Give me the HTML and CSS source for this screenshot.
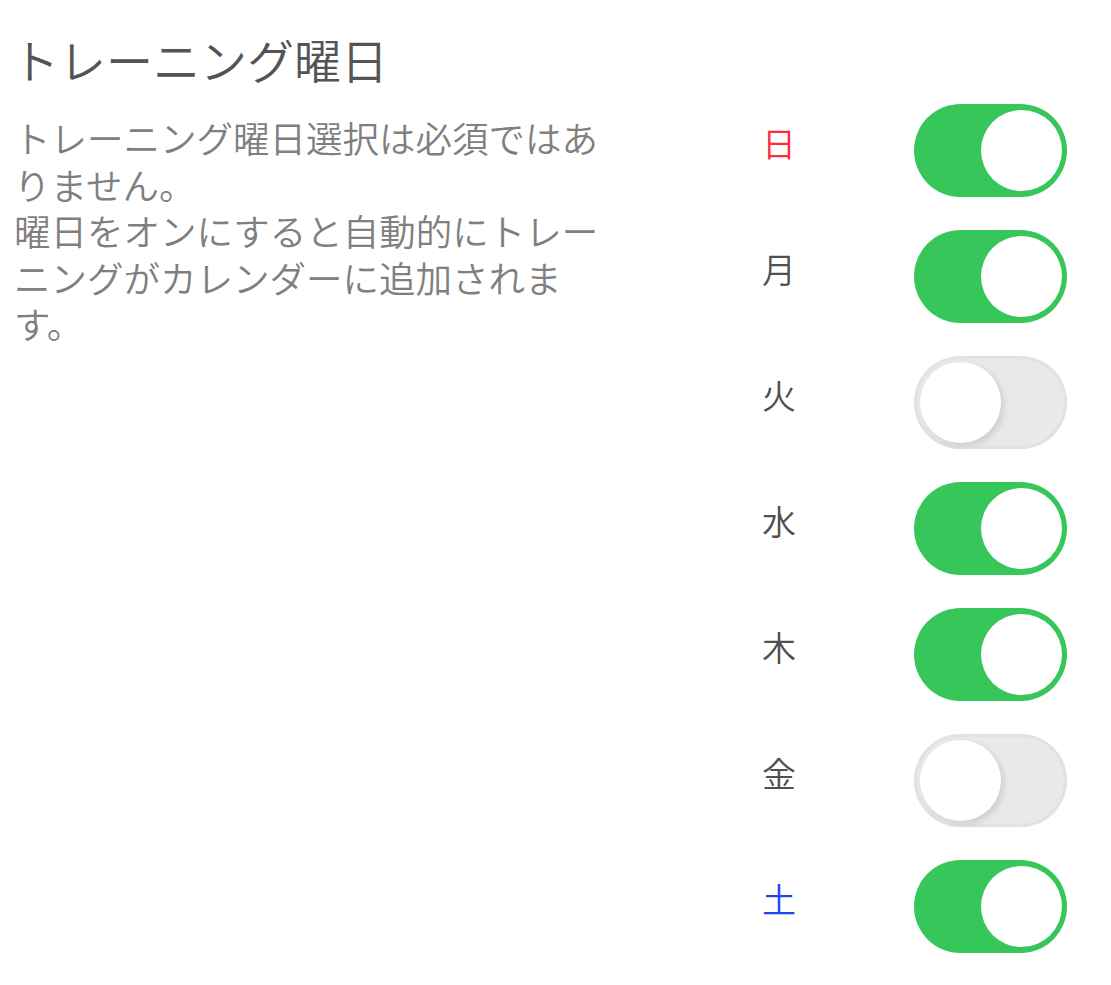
FILE: index.html
```html
<!DOCTYPE html>
<html lang="ja">
<head>
<meta charset="utf-8">
<title>トレーニング曜日</title>
<link rel="stylesheet" href="styles.css">
</head>
<body>
<div class="page">
  <h1 class="title">トレーニング曜日</h1>
  <div class="content">
    <p class="desc">トレーニング曜日選択は必須ではありません。<br>曜日をオンにすると自動的にトレーニングがカレンダーに追加されます。</p>
    <ul class="days">
      <li class="day"><span class="label sun">日</span><span class="toggle on"><span class="knob"></span></span></li>
      <li class="day"><span class="label">月</span><span class="toggle on"><span class="knob"></span></span></li>
      <li class="day"><span class="label">火</span><span class="toggle off"><span class="knob"></span></span></li>
      <li class="day"><span class="label">水</span><span class="toggle on"><span class="knob"></span></span></li>
      <li class="day"><span class="label">木</span><span class="toggle on"><span class="knob"></span></span></li>
      <li class="day"><span class="label">金</span><span class="toggle off"><span class="knob"></span></span></li>
      <li class="day"><span class="label sat">土</span><span class="toggle on"><span class="knob"></span></span></li>
    </ul>
  </div>
</div>
</body>
</html>
```
FILE: styles.css
```css
* { box-sizing: border-box; }
html, body { margin: 0; padding: 0; background: #fff; }
body {
  font-family: "Noto Sans CJK JP", "Noto Sans", sans-serif;
  font-weight: 350;
}
.page {
  width: 1111px;
}
.title {
  margin: 0;
  padding: 30px 0 0 12px;
  font-size: 47px;
  font-weight: 350;
  line-height: 57px;
  color: #545454;
}
.content {
  display: flex;
  align-items: flex-start;
}
.desc {
  margin: 0;
  padding: 28px 0 0 14px;
  width: 612px;
  font-size: 36.5px;
  line-height: 46.5px;
  color: #7f7f7f;
  line-break: strict;
}
.days {
  list-style: none;
  margin: 0 44px 0 auto;
  padding: 0;
}
.day {
  display: flex;
  align-items: center;
  height: 126px;
}
.label {
  width: 152px;
  margin-bottom: 14px;
  font-size: 34px;
  line-height: 40px;
  color: #505050;
}
.label.sun { color: #fb2b44; }
.label.sat { color: #1f44f7; }
.toggle {
  position: relative;
  display: block;
  width: 153px;
  height: 93px;
  border-radius: 47px;
}
.toggle.on { background: #36c659; }
.toggle.off {
  background: #e9e9ea;
  box-shadow: inset 0 0 0 3px #e2e2e2;
}
.knob {
  position: absolute;
  top: 6px;
  width: 81px;
  height: 81px;
  border-radius: 50%;
  background: #fff;
}
.toggle.on .knob { right: 5px; }
.toggle.off .knob {
  left: 6px;
  box-shadow: 3px 3px 6px rgba(0,0,0,0.12);
}
```
